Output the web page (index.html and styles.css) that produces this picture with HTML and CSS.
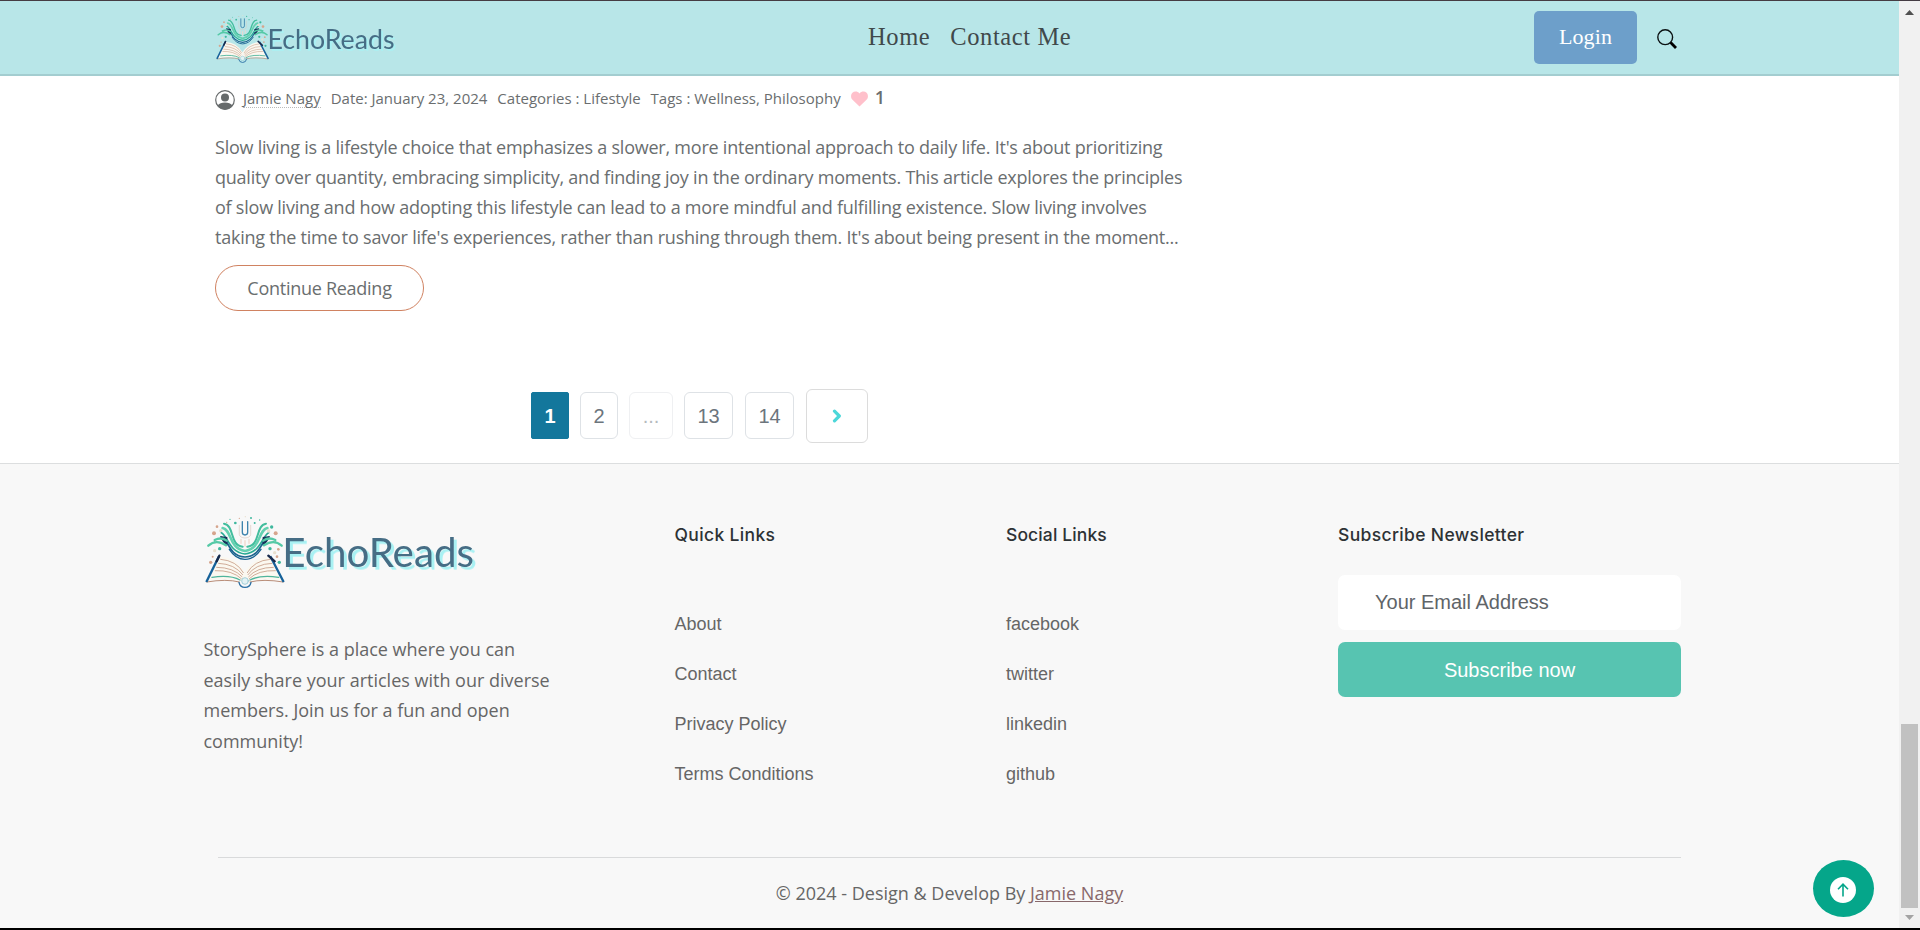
FILE: index.html
```html
<!DOCTYPE html>
<html lang="en">
<head>
<meta charset="utf-8">
<title>EchoReads</title>
<link rel="stylesheet" href="styles.css">
</head>
<body>
<svg class="defs" aria-hidden="true">
  <symbol id="book" viewBox="45 39 816 225">
    <g fill="none" stroke-linecap="round">
      <path d="M84 170Q135 168 164 216Q196 168 246 170L280 242Q205 232 164 246Q122 232 50 242Z" fill="#fbf8f0" stroke="none"/>
      <path d="M92 178Q140 182 160 218M86 190Q134 192 158 224M80 202Q130 202 156 230M76 212Q126 210 154 236M172 218Q192 182 240 178M174 224Q196 192 246 190M176 230Q200 202 250 202M178 236Q204 210 256 212" stroke="#c9a08b" stroke-width="2.6"/>
      <path d="M66 232Q120 224 150 240M180 240Q210 224 266 232" stroke="#4fb59c" stroke-width="4"/>
      <path d="M50 246Q110 236 148 246M180 246Q220 236 280 246" stroke="#b98d78" stroke-width="3"/>
      <path d="M87 169L49 246M241 169L281 246" stroke="#17629a" stroke-width="7" stroke-linecap="butt"/>
      <path d="M235 167L254 184M88 167L80 184" stroke="#182a4c" stroke-width="7"/>
      <path d="M147 247Q150 262 165 262Q180 262 183 247" stroke="#2b70a5" stroke-width="4"/>
      <circle cx="165" cy="243" r="10" fill="#e4f2f4" stroke="#7ebccb" stroke-width="2"/>
      <path d="M102 71C134 76 118 136 158 140M228 71C196 76 212 136 172 140" stroke="#42bd9d" stroke-width="6"/>
      <path d="M98 84C126 90 116 146 165 153C214 146 204 90 232 84" stroke="#65d1b1" stroke-width="8"/>
      <path d="M94 98C112 104 116 157 165 162C214 157 218 104 236 98" stroke="#28aa93" stroke-width="5"/>
      <path d="M94 113C116 112 112 168 165 171C218 168 214 112 236 113" stroke="#1e668f" stroke-width="5"/>
      <path d="M118 148Q137 178 165 178Q193 178 213 148" stroke="#176291" stroke-width="4"/>
      <path d="M90 108L112 111L112 137Q98 130 90 108ZM240 108L218 111L218 137Q232 130 240 108Z" fill="#162f59" stroke="none"/>
      <path d="M55 137Q78 116 108 136M275 137Q252 116 222 136M74 120Q94 110 110 122M256 120Q236 110 220 122" stroke="#55c9a6" stroke-width="7"/>
      <path d="M157 65V97Q157 105 165 105Q173 105 173 97V65" stroke="#3d83ad" stroke-width="4"/>
      <path d="M148 76V104Q150 113 165 114Q180 113 182 104V76" stroke="#d9c9c0" stroke-width="2"/>
      <path d="M165 122V138M153 118V130M177 118V130" stroke="#f0d8cc" stroke-width="4"/>
    </g>
    <g fill="#d6a58d">
      <circle cx="72" cy="100" r="6"/><circle cx="257" cy="100" r="6"/><circle cx="81" cy="80" r="4"/><circle cx="62" cy="187" r="5"/><circle cx="68" cy="170" r="3"/><circle cx="265" cy="148" r="4"/><circle cx="110" cy="67" r="2"/><circle cx="261" cy="170" r="4"/><circle cx="148" cy="55" r="2"/>
    </g>
    <g fill="#3fb89e">
      <circle cx="136" cy="69" r="4"/><circle cx="245" cy="81" r="5"/><circle cx="268" cy="187" r="5"/><circle cx="183" cy="54" r="3"/><circle cx="194" cy="69" r="3"/><circle cx="89" cy="146" r="5"/><circle cx="240" cy="146" r="5"/><circle cx="120" cy="58" r="2"/><circle cx="209" cy="60" r="2"/>
    </g>
    <g fill="#e9e0cf">
      <circle cx="92" cy="92" r="5"/><circle cx="236" cy="93" r="5"/><circle cx="74" cy="152" r="5"/><circle cx="254" cy="158" r="5"/><circle cx="166" cy="50" r="2"/>
    </g>
  </symbol>
</svg>
<div class="window">
  <div class="page">
    <header class="navbar">
      <svg class="nav-logo" viewBox="45 39 816 225"><use href="#book" x="45" y="39" width="816" height="225"/><text class="logo-text" x="277" y="200" textLength="573" lengthAdjust="spacingAndGlyphs">EchoReads</text></svg>
      <nav class="nav-links"><a>Home</a><a>Contact Me</a></nav>
      <div class="nav-actions">
        <a class="login">Login</a>
        <svg class="search" viewBox="0 0 20 20"><circle cx="8.2" cy="8.2" r="7.4" fill="none" stroke="#0b1112" stroke-width="1.4"/><path d="M13.6 13.6L19 19" stroke="#000" stroke-width="2.8"/></svg>
      </div>
    </header>
    <main class="article">
      <div class="meta">
        <svg class="avatar" viewBox="0 0 20 20"><circle cx="10" cy="10" r="9.3" fill="#fff" stroke="#666a6b" stroke-width="1.2"/><circle cx="10" cy="7.4" r="4" fill="#666a6b"/><path d="M2.4 15.6Q5 12.4 10 12.4T17.6 15.6Q14.6 19.6 10 19.6T2.4 15.6Z" fill="#666a6b"/></svg>
        <a class="author">Jamie Nagy</a>
        <span class="m-item">Date: January 23, 2024</span>
        <span class="m-item">Categories : Lifestyle</span>
        <span class="m-item">Tags : Wellness, Philosophy</span>
        <svg class="heart" viewBox="0 0 17 16"><path d="M8.5 15.6L1.5 8.8C-.5 6.7-.3 3.4 1.4 1.7C3.3-.2 6.6 0 8.5 2.4C10.4 0 13.7-.2 15.6 1.7C17.3 3.4 17.5 6.7 15.5 8.8Z" fill="#ffc0cb"/></svg>
        <b class="likes">1</b>
      </div>
      <p class="excerpt">Slow living is a lifestyle choice that emphasizes a slower, more intentional approach to daily life. It's about prioritizing<br>quality over quantity, embracing simplicity, and finding joy in the ordinary moments. This article explores the principles<br>of slow living and how adopting this lifestyle can lead to a more mindful and fulfilling existence. Slow living involves<br>taking the time to savor life's experiences, rather than rushing through them. It's about being present in the moment...</p>
      <a class="continue">Continue Reading</a>
      <div class="pagination">
        <span class="active"><b>1</b></span><a>2</a><a class="dots">...</a><a class="wide">13</a><a class="wide">14</a>
        <a class="next"><svg viewBox="0 0 10 14"><path d="M2.5 2.2L7.3 7L2.5 11.8" fill="none" stroke="#4cd7d9" stroke-width="3.2" stroke-linecap="round" stroke-linejoin="round"/></svg></a>
      </div>
    </main>
    <footer class="footer">
      <div class="columns">
        <section class="about">
          <svg class="foot-logo" viewBox="45 39 816 225"><use href="#book" x="45" y="39" width="816" height="225"/><text class="logo-text" x="277" y="200" textLength="575" lengthAdjust="spacingAndGlyphs">EchoReads</text></svg>
          <p>StorySphere is a place where you can<br>easily share your articles with our diverse<br>members. Join us for a fun and open<br>community!</p>
        </section>
        <section class="links">
          <h4>Quick Links</h4>
          <ul><li>About</li><li>Contact</li><li>Privacy Policy</li><li>Terms Conditions</li></ul>
        </section>
        <section class="links">
          <h4 class="h-social">Social Links</h4>
          <ul><li>facebook</li><li>twitter</li><li>linkedin</li><li>github</li></ul>
        </section>
        <section class="news">
          <h4>Subscribe Newsletter</h4>
          <div class="email">Your Email Address</div>
          <div class="subscribe">Subscribe now</div>
        </section>
      </div>
      <div class="copyright">© 2024 - Design &amp; Develop By <a>Jamie Nagy</a></div>
    </footer>
    <a class="to-top"><svg viewBox="0 0 26 26"><circle cx="13" cy="13" r="13" fill="#fff"/><path d="M13 19.5V7.2M8 12.2L13 7.2L18 12.2" fill="none" stroke="#05a68a" stroke-width="1.6"/></svg></a>
  </div>
  <div class="scrollbar">
    <svg class="arrow" viewBox="0 0 9 5"><path d="M4.5 0L9 5H0Z" fill="#505050"/></svg>
    <div class="thumb"></div>
    <svg class="arrow" viewBox="0 0 9 5"><path d="M0 0H9L4.5 5Z" fill="#a3a3a3"/></svg>
  </div>
</div>
</body>
</html>
```
FILE: styles.css
```css
* { box-sizing: border-box; }
body { margin: 0; background: #fff; font-family: "Open Sans", sans-serif; font-size: 18px; color: #6a6e6f; overflow: hidden; }
p, h4, ul { margin: 0; padding: 0; }
.defs { position: absolute; width: 0; height: 0; }
.logo-text { font-family: Lato, sans-serif; font-size: 120px; fill: #466d85; filter: drop-shadow(9px 8px 1px #a9f1f3); }

.window { display: flex; height: 930px; border-top: 1px solid #453c43; border-bottom: 2px solid #000; }
.page { position: relative; width: 1899px; display: flex; flex-direction: column; }

.navbar { height: 75px; flex: none; background: #b8e6e8; border-bottom: 2px solid #a3cdd0; display: grid; grid-template-columns: 652px 1fr auto; padding: 0 222px 0 216px; }
.nav-logo { width: 181px; height: 50px; margin-top: 12px; }
.nav-links { display: flex; gap: 20px; padding-top: 22px; font: 24.5px/28px "Liberation Serif", serif; letter-spacing: .6px; color: #40494b; }
.nav-actions { display: flex; gap: 20px; }
.login { width: 103px; height: 53px; margin-top: 10px; border-radius: 5px; background: #6d9fca; color: #fff; font: 22px/52px "Liberation Serif", serif; text-align: center; letter-spacing: .1px; }
.search { width: 20px; height: 20px; margin-top: 28px; }

.article { height: 387px; flex: none; padding-left: 215px; }
.meta { display: flex; height: 34px; margin-top: 7px; line-height: 30px; font-size: 15px; white-space: nowrap; }
.avatar { width: 20px; height: 20px; margin: 7px 8px 0 0; }
.author { height: 20px; margin: 5px 10px 0 0; line-height: 20px; border-bottom: 1px dotted #bbb; }
.m-item { margin-right: 10px; }
.heart { width: 17px; height: 16px; margin-top: 8px; margin-right: 7px; }
.likes { font-size: 18px; font-weight: 600; line-height: 29px; }
.excerpt { margin-top: 15px; line-height: 30px; white-space: nowrap; letter-spacing: -.23px; }
.continue { display: block; width: 209px; height: 46px; margin-top: 13px; border: 1px solid #d08261; border-radius: 23px; line-height: 44px; text-align: center; letter-spacing: -.27px; }
.pagination { display: flex; align-items: flex-start; width: 337px; height: 54px; margin: 78px 0 0 316px; font: 20px/46px "Liberation Sans", sans-serif; color: #6c757d; text-align: center; }
.pagination a, .pagination span { width: 38px; height: 47px; margin: 3px 11px 0 0; border: 1px solid #dee2e6; border-radius: 6px; flex: none; }
.pagination .active { background: #13779c; border-color: #13779c; border-radius: 2px; color: #fff; }
.pagination .dots { width: 44px; color: #b5babe; border-color: #eff0f2; }
.pagination .wide { width: 49px; margin-right: 12px; }
.pagination .next { display: flex; align-items: center; justify-content: center; width: 62px; height: 54px; border-color: #dcdcdc; margin: 0; }
.next svg { width: 10px; height: 14px; }

.footer { flex: 1; border-top: 1px solid #dcdedf; background: #f8f8f8; color: #666; }
.columns { display: grid; grid-template-columns: 471px 331.5px 332px 343px; height: 393px; padding-left: 203.5px; }
.foot-logo { display: block; width: 272px; height: 75px; margin: 49px 0 0 1.5px; }
.about p { margin-top: 46px; line-height: 30.5px; white-space: nowrap; }
.footer h4 { padding-top: 59px; font: 500 17.5px/24px Inter, sans-serif; letter-spacing: .35px; color: #2d3235; white-space: nowrap; }
.footer .h-social { letter-spacing: .12px; }
.links ul { margin-top: 52px; list-style: none; font: 18px/50px "Liberation Sans", sans-serif; }
.news { font-family: "Liberation Sans", sans-serif; font-size: 20px; }
.email { height: 55px; margin-top: 28px; padding-left: 37px; border-radius: 7px; background: #fff; line-height: 54px; color: #606468; }
.subscribe { height: 55px; margin-top: 12px; border-radius: 7px; background: #57c4b1; color: #fff; line-height: 56px; text-align: center; }
.copyright { width: 1463px; margin-left: 218px; border-top: 1px solid #d9dadb; padding-top: 19px; line-height: 32px; text-align: center; }
.copyright a { color: #88686b; text-decoration: underline; }
.to-top { position: absolute; left: 1813px; top: 859px; width: 61px; height: 57px; border-radius: 50%; background: #05a68a; }
.to-top svg { display: block; width: 26px; height: 26px; margin: 17px 0 0 17px; }

.scrollbar { width: 21px; display: flex; flex-direction: column; align-items: center; background: #f1f1f1; padding-top: 9px; }
.arrow { width: 9px; height: 5px; flex: none; }
.thumb { width: 17px; height: 184px; margin: 709px 0 7px; background: #c1c1c1; }
```
